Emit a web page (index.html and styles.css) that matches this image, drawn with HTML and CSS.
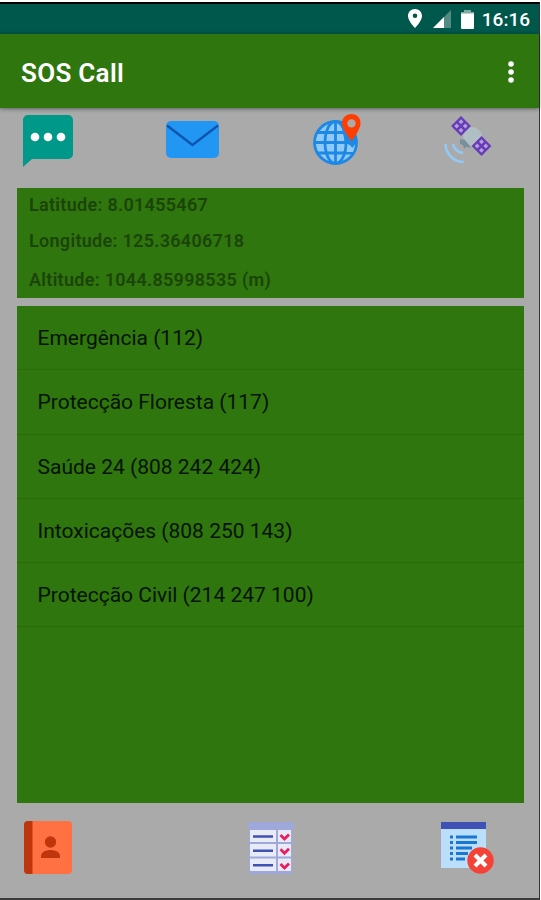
FILE: index.html
```html
<!DOCTYPE html>
<html lang="pt">
<head>
  <meta charset="UTF-8">
  <meta name="viewport" content="width=device-width, initial-scale=1.0">
  <title>SOS Call</title>
  <link rel="stylesheet" href="styles.css">
</head>
<body>
  <div class="app">
    <div class="status">
      <svg class="pin" width="14" height="20" viewBox="0 0 14 20"><path fill="#fff" fill-rule="evenodd" d="M7 0C3 0 0 3 0 7c0 5 7 12 7 12s7-7 7-12c0-4-3-7-7-7zM7 4.500a2.300 2.300 0 1 1 0 4.600 2.300 2.300 0 0 1 0-4.600z"/></svg>
      <svg class="signal" width="18" height="18" viewBox="0 0 18 18"><path fill="#528b83" d="M0 18L18 0V18z"/><path fill="#fff" d="M0 18L11 7V18z"/></svg>
      <svg class="battery" width="13" height="19" viewBox="0 0 13 19"><path fill="#7fa9a3" d="M0 2h3V0h7v2h3v3H0z"/><path fill="#fff" d="M0 3.500h13V18a1 1 0 0 1-1 1H1a1 1 0 0 1-1-1z"/></svg>
      <span class="hora">16:16</span>
    </div>

    <div class="toolbar">
      <h1>SOS Call</h1>
      <svg class="menu" width="6" height="22" viewBox="0 0 6 22" fill="#fff"><circle cx="3" cy="3" r="2.800"/><circle cx="3" cy="11" r="2.800"/><circle cx="3" cy="19" r="2.800"/></svg>
    </div>

    <div class="acoes">
      <svg class="sms" width="50" height="52" viewBox="0 0 50 52">
        <path fill="#009888" d="M5 0H45a5 5 0 0 1 5 5V39a5 5 0 0 1-5 5H9L0 52V5a5 5 0 0 1 5-5z"/>
        <g fill="#fff"><circle cx="12" cy="22" r="4.300"/><circle cx="25" cy="22" r="4.300"/><circle cx="38" cy="22" r="4.300"/></g>
      </svg>
      <svg class="mail" width="53" height="37" viewBox="0 0 53 37">
        <rect width="53" height="37" rx="5" fill="#2196f3"/>
        <path d="M1 4.500L26.500 24L52 4.500" fill="none" stroke="#0d55b0" stroke-width="2.400"/>
      </svg>
      <svg class="mapa" width="48" height="52" viewBox="0 0 48 52">
        <circle cx="22.500" cy="28.500" r="21" fill="#90caf9"/>
        <g fill="none" stroke="#1e88e5" stroke-width="2.800">
          <circle cx="22.500" cy="28.500" r="21"/>
          <ellipse cx="22.500" cy="28.500" rx="10.500" ry="21"/>
          <path d="M22.500 8V50M1 28.500H44M4.500 18.500H40M4.500 39H40.500"/>
        </g>
        <path fill="#1e88e5" d="M28 9l8 3 6 8 1 7-3 8-3-4-5-2-2-10z"/>
        <path fill="#90caf9" d="M34 33l4 2 4-4-2 7h-6z"/>
        <path fill="#ff3d00" d="M38.500 0c-5.500 0-9.500 4-9.500 9.300C29 16 38.500 27 38.500 27S47.500 16 47.500 9.300C47.500 4 44 0 38.500 0z"/>
        <circle cx="38.500" cy="9.400" r="4.200" fill="#aaa"/>
      </svg>
      <svg class="satelite" width="49" height="49" viewBox="0 0 49 49">
        <path stroke="#90a4ae" stroke-width="3" d="M15 7L41 33"/>
        <path fill="#b0bec5" d="M19 20c1-5 5-9 10-9 5 1 9 5 9 9l-9 10c-5-1-9-5-10-10z"/>
        <path fill="#78909c" d="M16 23l5 1 6 8-5-1-2 2-1-4-3-1z"/>
        <g transform="translate(17 10) rotate(45)">
          <rect x="-7" y="-7" width="14" height="14" fill="#673ab7"/>
          <path fill="#b39ddb" d="M-4.800-4.800h3.500v3.500h-3.500zM1.300-4.800h3.500v3.500H1.300zM-4.800 1.300h3.500v3.500h-3.500zM1.300 1.300h3.500v3.500H1.300z"/>
        </g>
        <g transform="translate(37.500 30) rotate(45)">
          <rect x="-7" y="-7" width="14" height="14" fill="#673ab7"/>
          <path fill="#b39ddb" d="M-4.800-4.800h3.500v3.500h-3.500zM1.300-4.800h3.500v3.500H1.300zM-4.800 1.300h3.500v3.500h-3.500zM1.300 1.300h3.500v3.500H1.300z"/>
        </g>
        <path fill="none" stroke="#90caf9" stroke-width="2.600" d="M9 28c1 5 4 8 10 9M1.500 28c0 9 8 18 18 18"/>
      </svg>
    </div>

    <div class="posicao">
      <p>Latitude: 8.01455467</p>
      <p>Longitude: 125.36406718</p>
      <p class="altitude">Altitude: 1044.85998535 (m)</p>
    </div>

    <ul class="contactos">
      <li>Emergência (112)</li>
      <li>Protecção Floresta (117)</li>
      <li>Saúde 24 (808 242 424)</li>
      <li>Intoxicações (808 250 143)</li>
      <li>Protecção Civil (214 247 100)</li>
    </ul>

    <div class="rodape">
      <svg class="agenda" width="48" height="53" viewBox="0 0 48 53">
        <rect width="48" height="53" rx="4" fill="#ff7043"/>
        <path fill="#bf360c" d="M4 0h4.500v53H4a4 4 0 0 1-4-4V4a4 4 0 0 1 4-4z"/>
        <circle cx="26.500" cy="21" r="5.700" fill="#bf360c"/>
        <path fill="#bf360c" d="M17 37v-2c0-4 5-6 9.500-6s9.500 2 9.500 6v2z"/>
      </svg>
      <svg class="lista" width="46" height="52" viewBox="0 0 46 52">
        <path fill="#9fa8da" d="M0 0h46v7h-1.500v45H1V7H0z"/>
        <path fill="#e8eaf6" d="M2 8h26v12H2zM30 8h13v12H30zM2 22h26v12.500H2zM30 22h13v12.500H30zM2 36.500h26V49H2zM30 36.500h13V49H30z"/>
        <path stroke="#3f51b5" stroke-width="2.400" d="M5 14.500h20M5 28.700h20M5 43.300h20"/>
        <path fill="none" stroke="#e91e63" stroke-width="2.800" d="M32.500 13l4 4 4.500-4.500M32.500 27.300l4 4 4.500-4.500M32.500 42l4 4L41 41.500"/>
      </svg>
      <svg class="apagar" width="53" height="52" viewBox="0 0 53 52">
        <path fill="#bbdefb" d="M0 6h45v40H0z"/>
        <path fill="#3f51b5" d="M0 0h45v7H0z"/>
        <path fill="#1976d2" d="M9 13.500h3v3H9zM15 13.500h21v3H15zM9 19h3v3H9zM15 19h21v3H15zM9 24.500h3v3H9zM15 24.500h16v3H15zM9 30h3v3H9zM15 30h12v3H15zM9 35.500h3v3H9zM15 35.500h9v3H15z"/>
        <circle cx="39.500" cy="38.500" r="13.200" fill="#f44336"/>
        <path stroke="#fff" stroke-width="4" d="M34 33L45 44M45 33L34 44"/>
      </svg>
    </div>
  </div>
</body>
</html>
```
FILE: styles.css
```css
* {
  box-sizing: border-box;
}

body {
  margin: 0;
  background-color: #fff;
  font-family: Roboto, sans-serif;
}

.app {
  width: 540px;
  height: 898px;
  margin-top: 2px;
  border-top: 2px solid #000;
  border-right: 1px solid #333;
  border-bottom: 2px solid #3c3c3c;
  background-color: #aaa;
  display: flex;
  flex-direction: column;
}

.status {
  height: 30px;
  background-color: #00574b;
  color: #fff;
  display: flex;
  justify-content: flex-end;
  align-items: center;
  padding-right: 9px;
}

.signal {
  margin-left: 11px;
}

.battery {
  margin-left: 10px;
}

.hora {
  margin-left: 8px;
  font-size: 19px;
  font-weight: 500;
}

.toolbar {
  height: 74px;
  background-color: #2f760e;
  color: #fff;
  box-shadow: 0 1px 4px rgba(0, 0, 0, 0.45);
  display: flex;
  justify-content: space-between;
  align-items: center;
  padding: 1px 25px 0 21px;
}

.toolbar h1 {
  margin: 2px 0 0;
  font-size: 26px;
  font-weight: 600;
  letter-spacing: 0.3px;
}

.acoes {
  height: 80px;
  display: grid;
  grid-template-columns: 143px 147px 131px 49px;
  align-items: start;
  padding: 6px 0 0 23px;
}

.sms {
  margin-top: 1px;
}

.mail {
  margin-top: 7px;
}

.satelite {
  margin-top: 2px;
}

.posicao {
  height: 110px;
  margin: 0 15px 0 17px;
  padding: 5px 12px;
  background-color: #2f760e;
  color: #1b440a;
  font-size: 18px;
  font-weight: 600;
  letter-spacing: 0.3px;
}

.posicao p {
  margin: 0 0 12px;
  line-height: 24px;
}

.posicao .altitude {
  margin-top: 15px;
}

.contactos {
  height: 497px;
  margin: 8px 15px 0 17px;
  padding: 0;
  list-style: none;
  background-color: #2f760e;
  color: #071302;
  font-size: 21px;
}

.contactos li {
  height: 64.300px;
  padding-left: 20.500px;
  line-height: 64px;
  border-bottom: 1px solid #296b0b;
}

.rodape {
  display: grid;
  grid-template-columns: 224px 193px 53px;
  align-items: start;
  padding: 18px 0 0 24px;
}

.lista,
.apagar {
  margin-top: 1px;
}
```
